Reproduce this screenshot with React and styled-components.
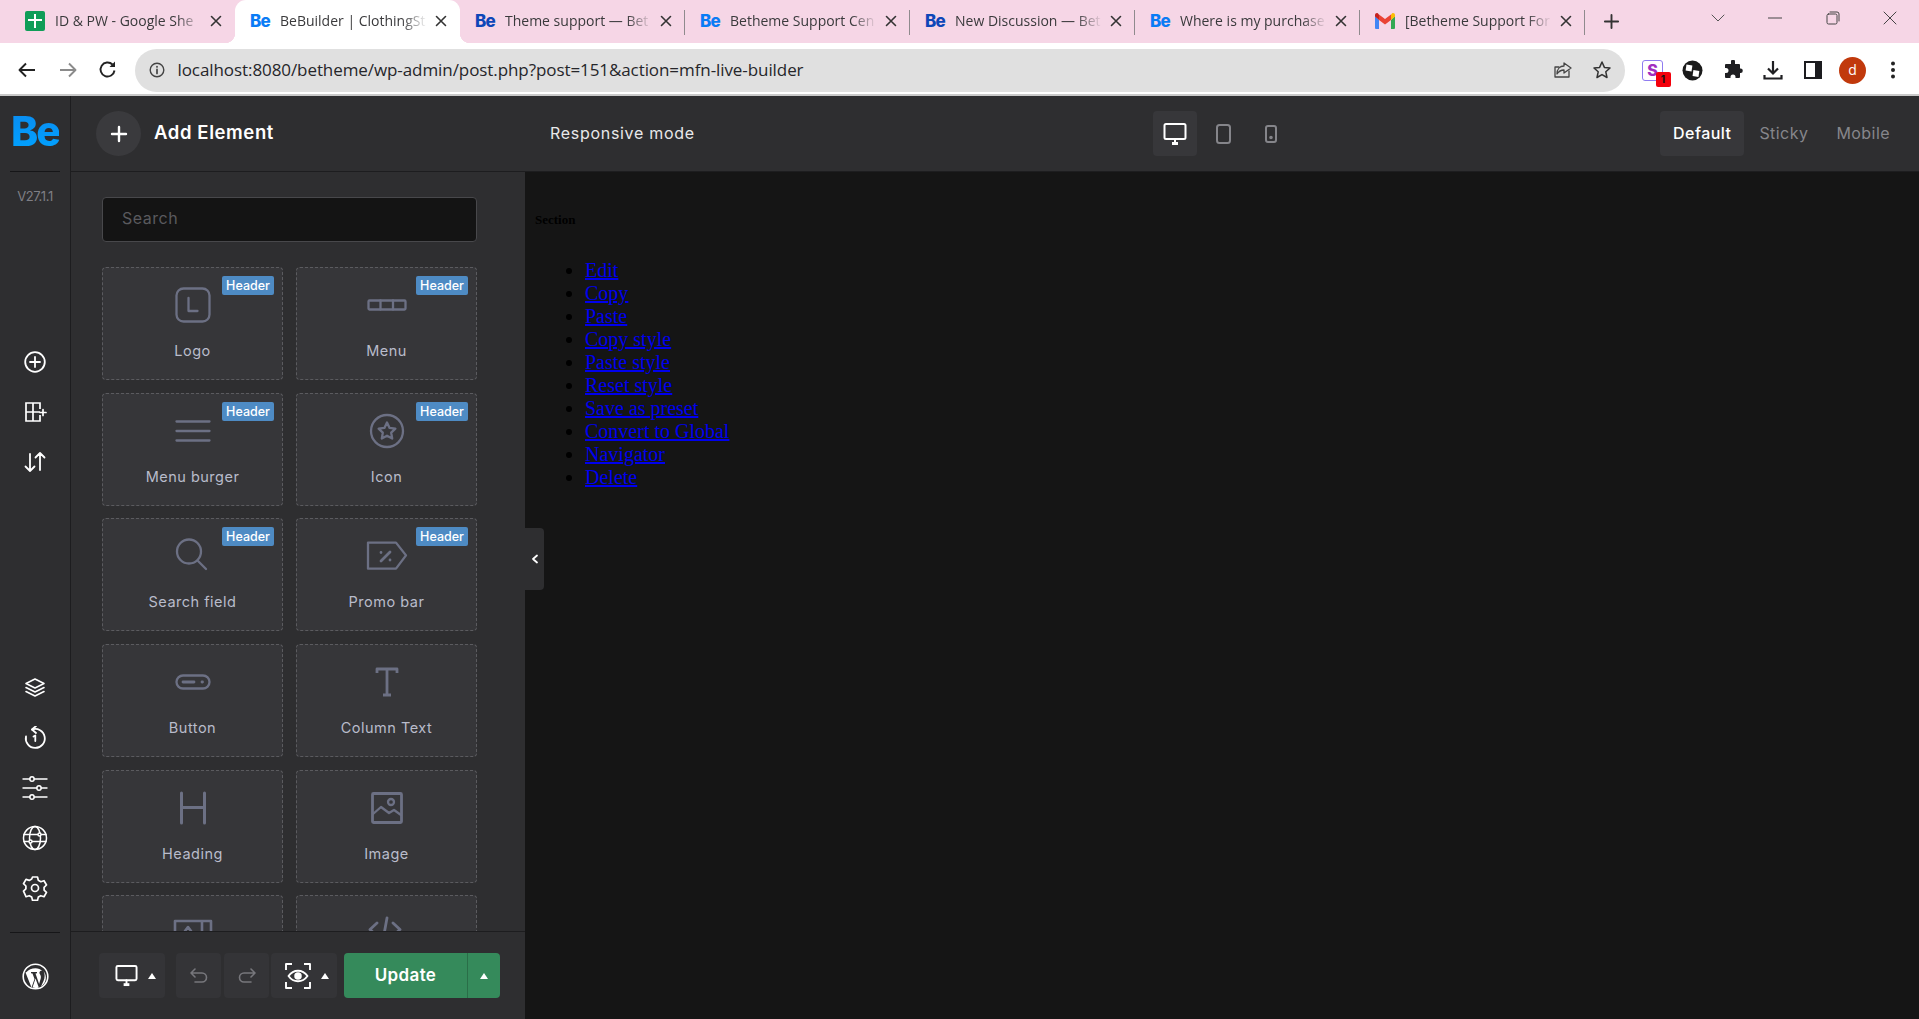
import styled, { createGlobalStyle } from "styled-components";

const GlobalStyle = createGlobalStyle`
  html, body { margin: 0; padding: 0; height: 100%; overflow: hidden; background: #151515; }
  * { box-sizing: border-box; }
`;

const UI_FONT = `"Inter", "Noto Sans", sans-serif`;
const CHROME_FONT = `"Open Sans", "Noto Sans", sans-serif`;

const Page = styled.div`
  width: 100%;
  height: 100vh;
  display: flex;
  flex-direction: column;
  overflow: hidden;
`;

/* browser chrome */
const TabStrip = styled.div`
  height: 43px;
  flex: none;
  background: #f6d6e6;
  display: flex;
  align-items: stretch;
  padding-left: 10px;
  font-family: ${CHROME_FONT};
`;

const Tab = styled.div`
  width: 225px;
  flex: none;
  position: relative;
  display: flex;
  align-items: center;
  padding-left: 15px;
  padding-bottom: 1px;
  background: ${(p) => (p.$active ? "#ffffff" : "transparent")};
  border-radius: 11px 11px 0 0;
  ${(p) =>
    p.$active &&
    `
    &::before, &::after {
      content: "";
      position: absolute;
      bottom: 0;
      width: 10px;
      height: 10px;
    }
    &::before { left: -10px; background: radial-gradient(circle at 0 0, transparent 10px, #fff 10.5px); }
    &::after { right: -10px; background: radial-gradient(circle at 100% 0, transparent 10px, #fff 10.5px); }
  `}
  ${(p) =>
    p.$sep &&
    `
    &::after {
      content: "";
      position: absolute;
      right: 0;
      top: 10px;
      height: 25px;
      width: 1px;
      background: #8f8a8d;
    }
  `}
`;

const TabIcon = styled.span`
  width: 20px;
  height: 20px;
  flex: none;
  display: flex;
  align-items: center;
  justify-content: center;
`;

const TabBe = styled.span`
  font-family: ${UI_FONT};
  font-weight: 800;
  font-size: 17px;
  letter-spacing: -0.8px;
  color: ${(p) => p.$color};
`;

const TabTitle = styled.span`
  margin-left: 10px;
  width: 150px;
  font-size: 14px;
  line-height: 20px;
  color: #3a3a3c;
  white-space: nowrap;
  overflow: hidden;
  -webkit-mask-image: linear-gradient(to right, #000 122px, transparent 147px);
  mask-image: linear-gradient(to right, #000 122px, transparent 147px);
`;

const TabClose = styled.span`
  margin-left: 5px;
  width: 12px;
  height: 12px;
  display: flex;
`;

const NewTab = styled.span`
  width: 56px;
  display: flex;
  align-items: center;
  justify-content: center;
  margin-left: -2px;
`;

const WindowControls = styled.div`
  margin-left: auto;
  display: flex;
  align-items: flex-start;
  padding-top: 8px;
  padding-right: 0;
`;

const WindowButton = styled.span`
  width: 57.5px;
  height: 20px;
  display: flex;
  align-items: center;
  justify-content: center;
`;

const Toolbar = styled.div`
  height: 53px;
  flex: none;
  background: #ffffff;
  border-bottom: 2px solid #c9c9c9;
  display: flex;
  align-items: center;
  padding-left: 7px;
  padding-top: 3px;
`;

const NavButton = styled.span`
  width: 40px;
  height: 40px;
  flex: none;
  display: flex;
  align-items: center;
  justify-content: center;
  margin-right: 0.5px;
`;

const AddressBar = styled.div`
  width: 1490px;
  height: 43px;
  margin-left: 6px;
  border-radius: 22px;
  background: #e0e0e0;
  display: flex;
  align-items: center;
  padding-left: 14px;
  padding-right: 13px;
  flex: none;
`;

const UrlText = styled.span`
  margin: -2px 0 0 13px;
  font-family: ${CHROME_FONT};
  font-size: 17px;
  letter-spacing: -0.08px;
  color: #26262a;
  white-space: nowrap;
`;

const PillActions = styled.div`
  margin-left: auto;
  display: flex;
  gap: 19px;
  align-items: center;
`;

const ExtensionRow = styled.div`
  display: flex;
  align-items: center;
  margin-left: 8px;
`;

const ExtSlot = styled.span`
  width: 40px;
  height: 40px;
  position: relative;
  display: flex;
  align-items: center;
  justify-content: center;
`;

const ExtS = styled.span`
  width: 21px;
  height: 21px;
  border: 1px solid #8f7cf0;
  border-radius: 3px;
  display: flex;
  align-items: center;
  justify-content: center;
  font-family: ${UI_FONT};
  font-weight: 800;
  font-size: 16px;
  color: #a12fbf;
`;

const ExtBadge = styled.span`
  position: absolute;
  left: 23px;
  top: 22px;
  width: 15px;
  height: 15px;
  background: #f3000b;
  border-radius: 2px;
  color: #111;
  font-family: ${UI_FONT};
  font-weight: 700;
  font-size: 10px;
  line-height: 15px;
  text-align: center;
`;

const Avatar = styled.span`
  width: 27px;
  height: 27px;
  border-radius: 50%;
  background: #c1390c;
  color: #fff;
  font-family: ${CHROME_FONT};
  font-size: 14px;
  line-height: 25px;
  text-align: center;
`;

/* builder */
const Builder = styled.div`
  flex: 1;
  min-height: 0;
  display: flex;
  background: #2e2e30;
  font-family: ${UI_FONT};
`;

const Rail = styled.aside`
  width: 71px;
  flex: none;
  background: #2e2e30;
  border-right: 1px solid #1d1d1f;
  display: flex;
  flex-direction: column;
  align-items: center;
`;

const LogoBox = styled.div`
  width: 50px;
  height: 76px;
  flex: none;
  border-bottom: 1px solid #161618;
  display: flex;
  align-items: center;
  justify-content: center;
`;

const LogoText = styled.span`
  font-weight: 800;
  font-size: 41px;
  line-height: 1;
  letter-spacing: -2px;
  margin-top: -5px;
  background: linear-gradient(180deg, #0a8cf0, #00a2ff);
  -webkit-background-clip: text;
  background-clip: text;
  color: transparent;
`;

const Version = styled.div`
  margin-top: 16px;
  font-size: 13px;
  line-height: 16px;
  letter-spacing: -0.4px;
  color: #7f7f85;
`;

const RailGroup = styled.div`
  display: flex;
  flex-direction: column;
  gap: 20px;
  margin-top: ${(p) => p.$top || "auto"};
`;

const RailIcon = styled.span`
  width: 30px;
  height: 30px;
  display: flex;
  align-items: center;
  justify-content: center;
`;

const RailFoot = styled.div`
  width: 50px;
  margin-top: 29px;
  border-top: 1px solid #161618;
  height: 87px;
  display: flex;
  align-items: flex-start;
  justify-content: center;
  padding-top: 30px;
`;

const Workspace = styled.div`
  flex: 1;
  min-width: 0;
  display: flex;
  flex-direction: column;
`;

const TopBar = styled.header`
  height: 76px;
  flex: none;
  display: flex;
  align-items: center;
  background: #2e2e30;
  border-bottom: 1px solid #1d1d1f;
`;

const AddHead = styled.div`
  width: 454px;
  flex: none;
  display: flex;
  align-items: center;
  padding-left: 25px;
  gap: 13px;
`;

const AddCircle = styled.span`
  width: 45px;
  height: 45px;
  border-radius: 50%;
  background: #3a3a3d;
  display: flex;
  align-items: center;
  justify-content: center;
`;

const AddTitle = styled.h1`
  margin: -3px 0 0;
  font-size: 18.5px;
  font-weight: 600;
  line-height: 24px;
  letter-spacing: 0.6px;
  color: #ffffff;
`;

const ResponsiveLabel = styled.div`
  width: 628px;
  flex: none;
  padding-left: 25px;
  margin-top: -2px;
  font-size: 16px;
  letter-spacing: 0.7px;
  color: #e8e8ea;
`;

const DeviceGroup = styled.div`
  display: flex;
  gap: 4px;
`;

const DeviceButton = styled.span`
  width: 44px;
  height: 45px;
  border-radius: 4px;
  background: ${(p) => (p.$active ? "#37373a" : "transparent")};
  display: flex;
  align-items: center;
  justify-content: center;
`;

const ModeTabs = styled.div`
  margin-left: auto;
  display: flex;
  gap: 2px;
  padding-right: 16px;
`;

const ModeTab = styled.span`
  height: 45px;
  padding: 0 13px;
  border-radius: 4px;
  background: ${(p) => (p.$active ? "#37373a" : "transparent")};
  color: ${(p) => (p.$active ? "#ffffff" : "#86868b")};
  font-size: 16px;
  font-weight: ${(p) => (p.$active ? 500 : 400)};
  line-height: 45px;
  letter-spacing: 0.45px;
`;

const Body = styled.div`
  flex: 1;
  min-height: 0;
  display: flex;
`;

const Panel = styled.aside`
  width: 454px;
  flex: none;
  display: flex;
  flex-direction: column;
  background: #2e2e30;
  position: relative;
`;

const PanelScroll = styled.div`
  flex: 1;
  min-height: 0;
  overflow: hidden;
  padding: 25px 48px 0 31px;
`;

const SearchBox = styled.div`
  height: 45px;
  background: #141414;
  border: 1px solid #48484b;
  border-radius: 4px;
  padding-left: 19px;
  font-size: 16px;
  line-height: 41px;
  letter-spacing: 0.5px;
  color: #5a5a5e;
`;

const ElementGrid = styled.div`
  margin-top: 25px;
  display: grid;
  grid-template-columns: 181px 181px;
  column-gap: 13px;
  row-gap: 12.7px;
`;

const ElementCard = styled.div`
  height: 113px;
  position: relative;
  background: #363639;
  border: 1px dashed #5b5b5f;
  border-radius: 4px;
  display: flex;
  flex-direction: column;
  align-items: center;
  padding-top: 13px;
`;

const ElementIcon = styled.span`
  width: 48px;
  height: 48px;
  display: flex;
  align-items: center;
  justify-content: center;
`;

const ElementLabel = styled.span`
  margin-top: 12px;
  font-size: 14.5px;
  line-height: 20px;
  letter-spacing: 0.5px;
  color: #b9bccb;
`;

const HeaderBadge = styled.span`
  position: absolute;
  top: 8px;
  right: 8px;
  width: 52px;
  height: 19px;
  border-radius: 2px;
  background: #4e8bc4;
  color: #ffffff;
  font-size: 12.5px;
  font-weight: 500;
  line-height: 19px;
  text-align: center;
`;

const PanelFoot = styled.div`
  height: 88px;
  flex: none;
  background: #2e2e30;
  border-top: 1px solid #1d1d1f;
  display: flex;
  align-items: flex-start;
  padding: 21px 0 0 28px;
`;

const FootButton = styled.span`
  width: ${(p) => p.$w}px;
  height: 45px;
  margin-left: ${(p) => p.$ml || 0}px;
  border-radius: 4px;
  background: #343437;
  display: flex;
  align-items: center;
  justify-content: center;
  gap: 10px;
  padding-left: ${(p) => (p.$caret ? 6 : 0)}px;
`;

const Caret = styled.span`
  width: 0;
  height: 0;
  border-left: 4.5px solid transparent;
  border-right: 4.5px solid transparent;
  border-bottom: 6px solid #ffffff;
`;

const UpdateButton = styled.div`
  width: 156px;
  height: 45px;
  margin-left: 7px;
  border-radius: 4px;
  background: #358a5b;
  display: flex;
  color: #ffffff;
  font-size: 17px;
  font-weight: 600;
  letter-spacing: 0.35px;
`;

const UpdateMain = styled.span`
  width: 124px;
  line-height: 44px;
  text-align: center;
  border-right: 1px solid #2a6e48;
`;

const UpdateCaret = styled.span`
  flex: 1;
  display: flex;
  align-items: center;
  justify-content: center;
`;

const CollapseHandle = styled.span`
  position: absolute;
  left: 100%;
  top: 356px;
  width: 19px;
  height: 62px;
  background: #2e2e30;
  border-radius: 0 4px 4px 0;
  display: flex;
  align-items: center;
  justify-content: center;
  z-index: 2;
`;

const Canvas = styled.main`
  flex: 1;
  min-width: 0;
  background: #151515;
  padding: 0 0 0 10px;
  font-family: "Liberation Serif", serif;
  color: #000000;
`;

const SectionName = styled.h6`
  margin: 40px 0 0;
  font-size: 13px;
  line-height: 15px;
  font-weight: 700;
`;

const ContextList = styled.ul`
  margin: 32px 0 0 10px;
  padding-left: 40px;
  font-size: 20px;
  line-height: 23px;
  list-style: disc;
`;

const ContextLink = styled.a`
  color: #0000ee;
  text-decoration: underline;
`;

/* icons */
const Svg = ({ size = 20, vb, children, stroke = "currentColor", sw = 2, fill = "none", color }) => (
  <svg
    width={size}
    height={size}
    viewBox={vb || `0 0 ${size} ${size}`}
    fill={fill}
    stroke={stroke}
    strokeWidth={sw}
    strokeLinecap="round"
    strokeLinejoin="round"
    style={color ? { color } : undefined}
  >
    {children}
  </svg>
);

const Plus = ({ size = 18, color = "#fff", sw = 2.4 }) => (
  <Svg size={size} vb="0 0 18 18" color={color} sw={sw}>
    <path d="M9 2v14M2 9h14" />
  </Svg>
);

const CloseX = ({ color = "#333" }) => (
  <Svg size={12} vb="0 0 12 12" color={color} sw={1.6}>
    <path d="M1.5 1.5l9 9M10.5 1.5l-9 9" />
  </Svg>
);

const SheetsIcon = () => (
  <svg width="20" height="20" viewBox="0 0 20 20">
    <rect width="20" height="20" rx="2" fill="#0f9d58" />
    <path d="M9 3h2v5h6v2h-6v7H9v-7H3V8h6z" fill="#fff" />
  </svg>
);

const GmailIcon = () => (
  <svg width="20" height="16" viewBox="0 0 20 16">
    <path d="M0 3v12a1 1 0 0 0 1 1h3V7z" fill="#4285f4" />
    <path d="M20 3v12a1 1 0 0 1-1 1h-3V7z" fill="#34a853" />
    <path d="M4 7L0 3.5V2C0 .4 1.8-.5 3 .5L4 1.5z" fill="#c5221f" />
    <path d="M4 7V1.5l6 4.5 6-4.5V7l-6 4.5z" fill="#ea4335" />
    <path d="M16 7l4-3.5V2c0-1.6-1.8-2.500-3-1.500l-1 1z" fill="#fbbc04" />
  </svg>
);

const ShareIcon = () => (
  <Svg size={20} color="#444" sw={1.3}>
    <path d="M16 11v6H2V7h4" />
    <path d="M11 3l7 5-7 5v-3c-3 0-5 1-7 4 0-5 3-8 7-8z" />
  </Svg>
);

const StarIcon = () => (
  <Svg size={20} color="#333" sw={1.5}>
    <path d="M10 2l2.400 5.400 5.600.6-4.200 3.800 1.200 5.700L10 14.600 5 17.500l1.200-5.700L2 8l5.600-.6z" />
  </Svg>
);

const BallIcon = () => (
  <svg width="21" height="21" viewBox="0 0 21 21">
    <circle cx="10.500" cy="10.500" r="10" fill="#1a1a1a" />
    <rect x="4" y="5" width="6" height="6" fill="#fff" transform="rotate(8 7 8)" />
    <rect x="11" y="10.500" width="6" height="6" fill="#fff" transform="rotate(8 14 13)" />
  </svg>
);

const PuzzleIcon = () => (
  <svg width="20" height="20" viewBox="0 0 20 20">
    <path
      d="M8 1.500a2 2 0 0 1 4 0V4h4a1 1 0 0 1 1 1v3.500h.6a2.200 2.200 0 0 1 0 4.400H17V17a1 1 0 0 1-1 1h-3.500v-1a2.500 2.500 0 0 0-5 0v1H3a1 1 0 0 1-1-1v-4h1a2.500 2.500 0 0 0 0-5H2V5a1 1 0 0 1 1-1h5z"
      fill="#1f1f22"
    />
  </svg>
);

const DownloadIcon = () => (
  <Svg size={20} color="#1f1f22" sw={2.2}>
    <path d="M10 1v12M5 8.500l5 5 5-5M1.500 15v3.500h17V15" strokeLinecap="butt" strokeLinejoin="miter" />
  </Svg>
);

const SidebarIcon = () => (
  <svg width="18" height="18" viewBox="0 0 18 18">
    <rect x="1" y="1" width="16" height="16" fill="none" stroke="#1c1c1f" strokeWidth="2" />
    <rect x="11" y="1" width="6" height="16" fill="#1c1c1f" />
  </svg>
);

const Kebab = () => (
  <svg width="6" height="18" viewBox="0 0 6 18">
    <circle cx="3" cy="2.500" r="2" fill="#222" />
    <circle cx="3" cy="9" r="2" fill="#222" />
    <circle cx="3" cy="15.500" r="2" fill="#222" />
  </svg>
);

const InfoIcon = () => (
  <Svg size={16} vb="0 0 16 16" color="#444" sw={1.4}>
    <circle cx="8" cy="8" r="6.800" />
    <path d="M8 7.400v4M8 4.600v.3" strokeWidth="1.700" />
  </Svg>
);

const DesktopIcon = ({ color = "#fff", size = 24 }) => (
  <Svg size={size} vb="0 0 24 24" color={color} sw={2}>
    <rect x="1.500" y="2" width="21" height="15" rx="1.500" />
    <path d="M9 21.500h6" strokeWidth="3" strokeLinecap="butt" />
    <path d="M12 17v3" strokeWidth="2" />
  </Svg>
);

const RailPlus = () => (
  <Svg size={22} vb="0 0 22 22" color="#fff" sw={1.8}>
    <circle cx="11" cy="11" r="9.800" />
    <path d="M11 6v10M6 11h10" />
  </Svg>
);

const RailLayout = () => (
  <Svg size={24} vb="0 0 24 24" color="#fff" sw={1.7}>
    <path d="M17 9V3H3v18h14v-6M3 12h14M10 3v18" strokeLinecap="butt" strokeLinejoin="miter" />
    <path d="M20 9.500v6M17 12.500h6" />
  </Svg>
);

const RailSort = () => (
  <Svg size={24} vb="0 0 24 24" color="#fff" sw={1.8}>
    <path d="M7 4v17M2.500 16.500L7 21l4.500-4.500M17 20V3M12.500 7.500L17 3l4.500 4.500" />
  </Svg>
);

const RailLayers = () => (
  <Svg size={22} vb="0 0 22 22" color="#fff" sw={1.6}>
    <path d="M11 2l9 4.500-9 4.500-9-4.500z" />
    <path d="M2 10.500l9 4.500 9-4.500M2 14.500l9 4.500 9-4.500" />
  </Svg>
);

const RailHistory = () => (
  <Svg size={24} vb="0 0 24 24" color="#fff" sw={1.8}>
    <path d="M9 3.500a9.500 9.500 0 1 1-6 7" />
    <path d="M13 0L9 3.500 13 7" />
    <path d="M10.500 10.500l1.800-1V15" />
  </Svg>
);

const RailSliders = () => (
  <Svg size={26} vb="0 0 26 26" color="#fff" sw={1.4}>
    <path d="M1 4h7M12 4h13M1 13h14M19 13h6M1 22h7M12 22h13" />
    <circle cx="10" cy="4" r="2.200" />
    <circle cx="17" cy="13" r="2.200" />
    <circle cx="10" cy="22" r="2.200" />
  </Svg>
);

const RailGlobe = () => (
  <Svg size={26} vb="0 0 26 26" color="#fff" sw={1.5}>
    <circle cx="13" cy="13" r="11.500" />
    <ellipse cx="13" cy="13" rx="5.500" ry="11.500" />
    <path d="M2 9.500h22M2 16.500h22" />
    <circle cx="17.500" cy="9.500" r="1.500" fill="#2e2e30" />
    <circle cx="8.500" cy="16.500" r="1.500" fill="#2e2e30" />
  </Svg>
);

const RailGear = () => (
  <Svg size={26} vb="0 0 26 26" color="#fff" sw={1.7}>
    <circle cx="13" cy="13" r="3.500" />
    <path d="M10.500 2h5l.8 3.300 2.500 1.400 3.200-1 2.500 4.300-2.400 2.300v2.800l2.400 2.300-2.500 4.300-3.200-1-2.500 1.400-.8 3.300h-5l-.8-3.300-2.500-1.400-3.200 1L1.500 16.100l2.400-2.300V11L1.500 8.700 4 4.400l3.200 1 2.500-1.400z" />
  </Svg>
);

const WpIcon = () => (
  <svg width="27" height="27" viewBox="0 0 27 27">
    <circle cx="13.500" cy="13.500" r="12.300" fill="none" stroke="#fff" strokeWidth="1.600" />
    <path
      d="M3.500 9.500L9.500 24.500 12.500 16 10.500 10.500 9 10.300V9h6v1.300l-1.500.2 3.600 10.500 1.500-5c.6-2 .3-3-.5-4.500-.7-1.200-1-2.300 0-3.300 1-.7 2-.5 2.700 0-2.300-2-4.600-3-7.300-3-3.700 0-7.100 1.700-9 3.800z"
      fill="#fff"
    />
    <path d="M13.500 15.500l-3 9c2 .6 4.500.6 6.300-.1zM21.500 8c1.500 3 1.500 6.500 0 10l-2.500 5.500c4.500-2.500 7-10 2.500-15.500z" fill="#fff" />
  </svg>
);

const STROKE = "#6c7084";

const ElSvg = ({ children }) => (
  <Svg size={44} vb="0 0 44 44" color={STROKE} sw={2.3}>
    {children}
  </Svg>
);

const icons = {
  logo: (
    <ElSvg>
      <rect x="5.500" y="5.500" width="33" height="33" rx="7" />
      <path d="M17.500 15v13h9" />
    </ElSvg>
  ),
  menu: (
    <ElSvg>
      <rect x="3.500" y="17.500" width="37" height="9" rx="1" />
      <path d="M15.500 17.500v9M28 17.500v9" />
    </ElSvg>
  ),
  burger: (
    <ElSvg>
      <path d="M5.500 12.500h33M5.500 22h33M5.500 31.500h33" />
    </ElSvg>
  ),
  icon: (
    <ElSvg>
      <circle cx="22" cy="22" r="16" />
      <path d="M22 13.500l2.600 5.400 5.800.8-4.200 4 1 5.800-5.200-2.800-5.200 2.800 1-5.800-4.200-4 5.800-.8z" />
    </ElSvg>
  ),
  search: (
    <ElSvg>
      <circle cx="18" cy="17.500" r="12" />
      <path d="M27 27l8 8" />
    </ElSvg>
  ),
  promo: (
    <ElSvg>
      <path d="M3 8.500h28L41 22 31 36H3z" transform="translate(0 .5) scale(1 .95)" />
      <path d="M16 27l9-9M16 18.500v.1M25 26v.1" strokeWidth="2.800" />
    </ElSvg>
  ),
  button: (
    <ElSvg>
      <rect x="5.500" y="15.500" width="33" height="13" rx="6.500" />
      <path d="M12 22h11M31 22h.5" strokeWidth="2.800" />
    </ElSvg>
  ),
  text: (
    <ElSvg>
      <path d="M12 13v-4h20v4M22 9v26M18 35h8" strokeWidth="2.800" strokeLinecap="butt" />
    </ElSvg>
  ),
  heading: (
    <ElSvg>
      <path d="M10.500 7v30M33.500 7v30M10.500 21.500h23" strokeWidth="3" />
    </ElSvg>
  ),
  image: (
    <ElSvg>
      <rect x="7.500" y="7.500" width="29" height="29" rx="1" strokeWidth="2.800" />
      <circle cx="26" cy="16" r="3" />
      <path d="M8 28l8-7 8 6 5-3 7 5" />
    </ElSvg>
  ),
  video: (
    <ElSvg>
      <path d="M4 42V10h36v32M31 10v32M17 16l3 4-3 4-3-4z" strokeWidth="2.600" />
    </ElSvg>
  ),
  code: (
    <ElSvg>
      <path d="M12 12l-7 6.500 7 6.500M28 12l7 6.500-7 6.500M22 7l-4 22" strokeWidth="2.800" />
    </ElSvg>
  ),
};

const tabs = [
  { title: "ID & PW - Google She", icon: <SheetsIcon /> },
  { title: "BeBuilder | ClothingSt", be: "#0a7cf5", active: true },
  { title: "Theme support — Bet", be: "#0e47b8", sep: true },
  { title: "Betheme Support Cen", be: "#0a7cf5", sep: true },
  { title: "New Discussion — Bet", be: "#0e47b8", sep: true },
  { title: "Where is my purchase", be: "#0a7cf5", sep: true },
  { title: "[Betheme Support For", icon: <GmailIcon />, sep: true },
];

const elements = [
  { id: "logo", label: "Logo", badge: true },
  { id: "menu", label: "Menu", badge: true },
  { id: "burger", label: "Menu burger", badge: true },
  { id: "icon", label: "Icon", badge: true },
  { id: "search", label: "Search field", badge: true },
  { id: "promo", label: "Promo bar", badge: true },
  { id: "button", label: "Button" },
  { id: "text", label: "Column Text" },
  { id: "heading", label: "Heading" },
  { id: "image", label: "Image" },
  { id: "video" },
  { id: "code" },
];

const menuLinks = [
  "Edit",
  "Copy",
  "Paste",
  "Copy style",
  "Paste style",
  "Reset style",
  "Save as preset",
  "Convert to Global",
  "Navigator",
  "Delete",
];

const App = () => {
  return (
    <Page>
      <GlobalStyle />
      <TabStrip>
        {tabs.map((tab) => (
          <Tab key={tab.title} $active={tab.active} $sep={tab.sep}>
            <TabIcon>{tab.icon || <TabBe $color={tab.be}>Be</TabBe>}</TabIcon>
            <TabTitle>{tab.title}</TabTitle>
            <TabClose>
              <CloseX />
            </TabClose>
          </Tab>
        ))}
        <NewTab>
          <Plus size={17} color="#333" sw={2} />
        </NewTab>
        <WindowControls>
          <WindowButton>
            <Svg size={14} vb="0 0 14 14" color="#555" sw={1}>
              <path d="M1 4l6 6 6-6" />
            </Svg>
          </WindowButton>
          <WindowButton>
            <Svg size={14} vb="0 0 14 14" color="#444" sw={1}>
              <path d="M0 7h14" />
            </Svg>
          </WindowButton>
          <WindowButton>
            <Svg size={14} vb="0 0 14 14" color="#444" sw={1}>
              <rect x="1" y="3" width="10" height="10" rx="1.500" />
              <path d="M4 1h7a2 2 0 0 1 2 2v7" />
            </Svg>
          </WindowButton>
          <WindowButton>
            <Svg size={14} vb="0 0 14 14" color="#444" sw={1}>
              <path d="M1 1l12 12M13 1L1 13" />
            </Svg>
          </WindowButton>
        </WindowControls>
      </TabStrip>

      <Toolbar>
        <NavButton>
          <Svg size={20} color="#222" sw={1.9}>
            <path d="M18 10H3M9 3.500L2.500 10 9 16.500" strokeLinecap="butt" />
          </Svg>
        </NavButton>
        <NavButton>
          <Svg size={20} color="#8b8b8b" sw={1.9}>
            <path d="M2 10h15M11 3.500l6.500 6.500-6.500 6.500" strokeLinecap="butt" />
          </Svg>
        </NavButton>
        <NavButton>
          <Svg size={20} color="#222" sw={1.9}>
            <path d="M16.500 10.500a7 7 0 1 1-2-6" strokeLinecap="butt" />
            <path d="M17 1.500v5.500h-5.500" fill="#222" stroke="none" />
          </Svg>
        </NavButton>
        <AddressBar>
          <InfoIcon />
          <UrlText>localhost:8080/betheme/wp-admin/post.php?post=151&action=mfn-live-builder</UrlText>
          <PillActions>
            <ShareIcon />
            <StarIcon />
          </PillActions>
        </AddressBar>
        <ExtensionRow>
          <ExtSlot>
            <ExtS>S</ExtS>
            <ExtBadge>1</ExtBadge>
          </ExtSlot>
          <ExtSlot>
            <BallIcon />
          </ExtSlot>
          <ExtSlot>
            <PuzzleIcon />
          </ExtSlot>
          <ExtSlot>
            <DownloadIcon />
          </ExtSlot>
          <ExtSlot>
            <SidebarIcon />
          </ExtSlot>
          <ExtSlot>
            <Avatar>d</Avatar>
          </ExtSlot>
          <ExtSlot>
            <Kebab />
          </ExtSlot>
        </ExtensionRow>
      </Toolbar>

      <Builder>
        <Rail>
          <LogoBox>
            <LogoText>Be</LogoText>
          </LogoBox>
          <Version>V27.1.1</Version>
          <RailGroup $top="143px">
            <RailIcon>
              <RailPlus />
            </RailIcon>
            <RailIcon>
              <RailLayout />
            </RailIcon>
            <RailIcon>
              <RailSort />
            </RailIcon>
          </RailGroup>
          <RailGroup>
            <RailIcon>
              <RailLayers />
            </RailIcon>
            <RailIcon>
              <RailHistory />
            </RailIcon>
            <RailIcon>
              <RailSliders />
            </RailIcon>
            <RailIcon>
              <RailGlobe />
            </RailIcon>
            <RailIcon>
              <RailGear />
            </RailIcon>
          </RailGroup>
          <RailFoot>
            <WpIcon />
          </RailFoot>
        </Rail>

        <Workspace>
          <TopBar>
            <AddHead>
              <AddCircle>
                <Plus />
              </AddCircle>
              <AddTitle>Add Element</AddTitle>
            </AddHead>
            <ResponsiveLabel>Responsive mode</ResponsiveLabel>
            <DeviceGroup>
              <DeviceButton $active>
                <DesktopIcon />
              </DeviceButton>
              <DeviceButton>
                <svg width="15" height="20" viewBox="0 0 15 20" fill="none" stroke="#85858a" strokeWidth="2">
                  <rect x="1" y="1" width="13" height="18" rx="2.500" />
                </svg>
              </DeviceButton>
              <DeviceButton>
                <svg width="12" height="18" viewBox="0 0 12 18" fill="none" stroke="#85858a" strokeWidth="2">
                  <rect x="1" y="1" width="10" height="16" rx="2" />
                  <circle cx="6" cy="12.500" r="0.800" fill="#85858a" />
                </svg>
              </DeviceButton>
            </DeviceGroup>
            <ModeTabs>
              <ModeTab $active>Default</ModeTab>
              <ModeTab>Sticky</ModeTab>
              <ModeTab>Mobile</ModeTab>
            </ModeTabs>
          </TopBar>

          <Body>
            <Panel>
              <PanelScroll>
                <SearchBox>Search</SearchBox>
                <ElementGrid>
                  {elements.map((el) => (
                    <ElementCard key={el.id}>
                      {el.badge && <HeaderBadge>Header</HeaderBadge>}
                      <ElementIcon>{icons[el.id]}</ElementIcon>
                      {el.label && <ElementLabel>{el.label}</ElementLabel>}
                    </ElementCard>
                  ))}
                </ElementGrid>
              </PanelScroll>
              <PanelFoot>
                <FootButton $w={66} $caret>
                  <DesktopIcon size={23} />
                  <Caret />
                </FootButton>
                <FootButton $w={45} $ml={11}>
                  <Svg size={20} color="#77777c" sw={1.6}>
                    <path d="M6 3L2 7l4 4M2 7h11a4.500 4.500 0 0 1 0 9H6" />
                  </Svg>
                </FootButton>
                <FootButton $w={45} $ml={3}>
                  <Svg size={20} color="#77777c" sw={1.6}>
                    <path d="M14 3l4 4-4 4M18 7H7a4.500 4.500 0 0 0 0 9h7" />
                  </Svg>
                </FootButton>
                <FootButton $w={66} $ml={2} $caret>
                  <Svg size={26} vb="0 0 26 26" color="#fff" sw={1.9}>
                    <path d="M1 7V1h6M19 1h6v6M25 19v6h-6M7 25H1v-6" strokeLinecap="butt" />
                    <path d="M3.500 13c5-7 14-7 19 0-5 7-14 7-19 0z" />
                    <circle cx="13" cy="13" r="2.800" fill="#fff" />
                  </Svg>
                  <Caret />
                </FootButton>
                <UpdateButton>
                  <UpdateMain>Update</UpdateMain>
                  <UpdateCaret>
                    <Caret />
                  </UpdateCaret>
                </UpdateButton>
              </PanelFoot>
              <CollapseHandle>
                <Svg size={10} vb="0 0 10 10" color="#fff" sw={1.800}>
                  <path d="M7 1.500L3 5l4 3.500" />
                </Svg>
              </CollapseHandle>
            </Panel>
            <Canvas>
              <SectionName>Section</SectionName>
              <ContextList>
                {menuLinks.map((link) => (
                  <li key={link}>
                    <ContextLink href="#">{link}</ContextLink>
                  </li>
                ))}
              </ContextList>
            </Canvas>
          </Body>
        </Workspace>
      </Builder>
    </Page>
  );
};

export default App;
